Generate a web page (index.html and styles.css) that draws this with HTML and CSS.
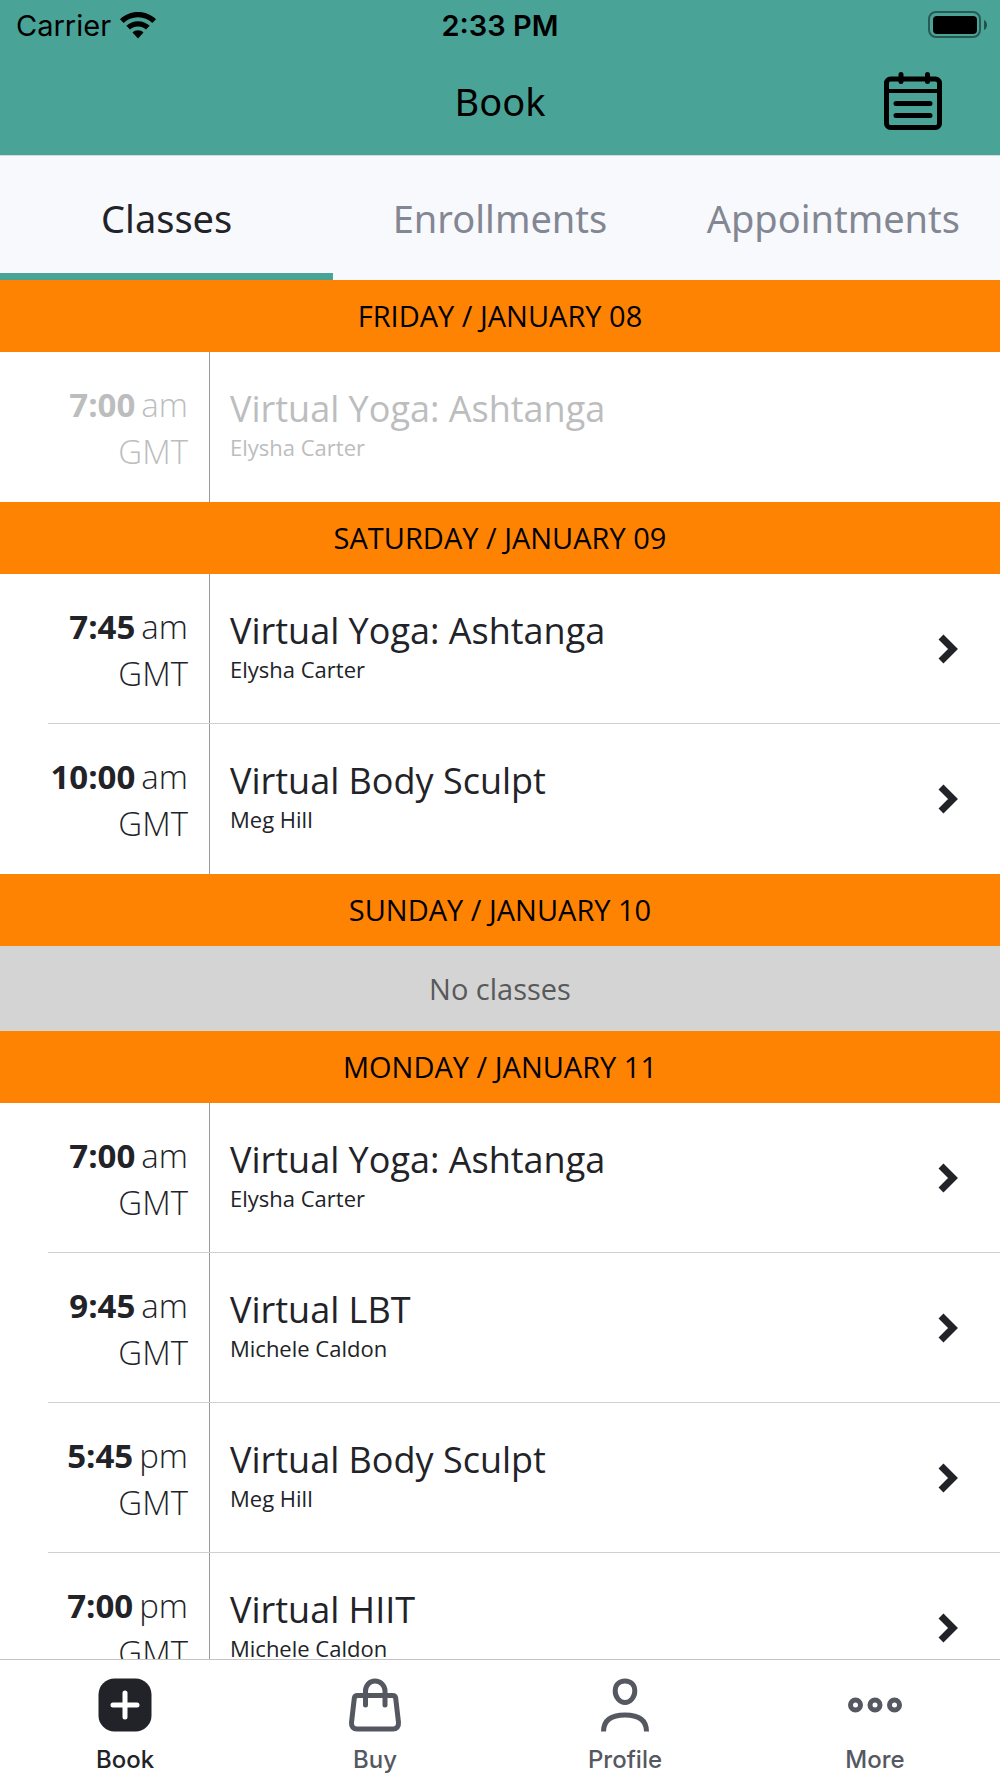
FILE: index.html
```html
<!DOCTYPE html>
<html lang="en">
<head>
    <meta charset="UTF-8">
    <meta name="viewport" content="width=device-width, initial-scale=1.0">
    <title>Book</title>
    <link rel="stylesheet" href="styles.css">
</head>
<body>
    <div class="wrapper">
        <!-- header -->
        <header class="header">
            <div class="status">
                <div class="carrier">
                    <span>Carrier</span>
                    <svg width="36" height="27" viewBox="0 0 36 27">
                        <path d="M18 0C11 0 4.700 2.700 0 7.200L3.700 11C7.400 7.400 12.400 5.300 18 5.300S28.600 7.400 32.300 11L36 7.200C31.300 2.700 25 0 18 0Z"/>
                        <path d="M18 9.200c-4.500 0-8.600 1.700-11.700 4.600L10 17.600c2.100-2 4.900-3.200 8-3.200s5.900 1.200 8 3.200l3.700-3.800C26.600 10.900 22.500 9.200 18 9.200Z"/>
                        <path d="M18 18.200c-2.100 0-4 .8-5.500 2.200L18 26.500l5.500-6.100c-1.500-1.400-3.400-2.200-5.500-2.200Z"/>
                    </svg>
                </div>
                <div class="clock">2:33 PM</div>
                <div class="battery">
                    <svg width="60" height="28" viewBox="0 0 60 28">
                        <rect x="1" y="1" width="51" height="25" rx="7" fill="none" stroke="#000" stroke-opacity=".45" stroke-width="2"/>
                        <rect x="5" y="5" width="44" height="18" rx="4"/>
                        <path d="M56 9c4 1.500 4 8.500 0 10Z" fill-opacity=".5"/>
                    </svg>
                </div>
            </div>
            <div class="title-bar">
                <h1>Book</h1>
                <button class="calendar" type="button" aria-label="Calendar">
                    <svg width="58" height="58" viewBox="0 0 58 58" fill="none" stroke="#000" stroke-linecap="round">
                        <rect x="2.500" y="7" width="53" height="48.500" rx="4" stroke-width="5"/>
                        <path d="M3 19h52" stroke-width="4"/>
                        <path d="M17 2.500v7M43.500 2.500v7M12 31.500h34M12 43.500h34" stroke-width="5"/>
                    </svg>
                </button>
            </div>
        </header>
        <!-- tabs -->
        <nav class="tabs">
            <a class="active" href="#classes">Classes</a>
            <a href="#enrollments">Enrollments</a>
            <a href="#appointments">Appointments</a>
        </nav>
        <!-- class list -->
        <main class="list" id="classes">
            <section>
                <h2>FRIDAY / JANUARY 08</h2>
                <ul>
                    <li class="past">
                        <div class="row">
                            <div class="time"><b>7:00</b><span>am</span><p>GMT</p></div>
                            <div class="info"><h3>Virtual Yoga: Ashtanga</h3><p>Elysha Carter</p></div>
                        </div>
                    </li>
                </ul>
            </section>
            <section>
                <h2>SATURDAY / JANUARY 09</h2>
                <ul>
                    <li>
                        <a class="row" href="#class">
                            <div class="time"><b>7:45</b><span>am</span><p>GMT</p></div>
                            <div class="info"><h3>Virtual Yoga: Ashtanga</h3><p>Elysha Carter</p></div>
                            <svg class="arrow" viewBox="0 0 20 32"><path d="M3 4l12 12L3 28"/></svg>
                        </a>
                    </li>
                    <li>
                        <a class="row" href="#class">
                            <div class="time"><b>10:00</b><span>am</span><p>GMT</p></div>
                            <div class="info"><h3>Virtual Body Sculpt</h3><p>Meg Hill</p></div>
                            <svg class="arrow" viewBox="0 0 20 32"><path d="M3 4l12 12L3 28"/></svg>
                        </a>
                    </li>
                </ul>
            </section>
            <section>
                <h2>SUNDAY / JANUARY 10</h2>
                <p class="empty">No classes</p>
            </section>
            <section>
                <h2>MONDAY / JANUARY 11</h2>
                <ul>
                    <li>
                        <a class="row" href="#class">
                            <div class="time"><b>7:00</b><span>am</span><p>GMT</p></div>
                            <div class="info"><h3>Virtual Yoga: Ashtanga</h3><p>Elysha Carter</p></div>
                            <svg class="arrow" viewBox="0 0 20 32"><path d="M3 4l12 12L3 28"/></svg>
                        </a>
                    </li>
                    <li>
                        <a class="row" href="#class">
                            <div class="time"><b>9:45</b><span>am</span><p>GMT</p></div>
                            <div class="info"><h3>Virtual LBT</h3><p>Michele Caldon</p></div>
                            <svg class="arrow" viewBox="0 0 20 32"><path d="M3 4l12 12L3 28"/></svg>
                        </a>
                    </li>
                    <li>
                        <a class="row" href="#class">
                            <div class="time"><b>5:45</b><span>pm</span><p>GMT</p></div>
                            <div class="info"><h3>Virtual Body Sculpt</h3><p>Meg Hill</p></div>
                            <svg class="arrow" viewBox="0 0 20 32"><path d="M3 4l12 12L3 28"/></svg>
                        </a>
                    </li>
                    <li>
                        <a class="row" href="#class">
                            <div class="time"><b>7:00</b><span>pm</span><p>GMT</p></div>
                            <div class="info"><h3>Virtual HIIT</h3><p>Michele Caldon</p></div>
                            <svg class="arrow" viewBox="0 0 20 32"><path d="M3 4l12 12L3 28"/></svg>
                        </a>
                    </li>
                </ul>
            </section>
        </main>
        <!-- bottom navigation -->
        <nav class="footer">
            <a class="active" href="#book">
                <svg viewBox="0 0 54 54">
                    <rect x="0.500" y="0.500" width="53" height="53" rx="16" fill="#222328"/>
                    <path d="M27 15v24M15 27h24" stroke="#fff" stroke-width="5" stroke-linecap="round"/>
                </svg>
                <span>Book</span>
            </a>
            <a href="#buy">
                <svg viewBox="0 0 54 54" fill="none" stroke="#555861" stroke-width="5" stroke-linecap="round" stroke-linejoin="round">
                    <path d="M9.500 17.500h35c2 0 3 1 3.200 2.700l2.800 24.300c.4 4-2 6.500-5.500 6.500H9c-3.500 0-5.900-2.500-5.500-6.500l2.800-24.300c.2-1.700 1.200-2.700 3.200-2.700Z"/>
                    <path d="M17.500 27V13c0-5.500 4-10 9.500-10s10 4.500 10 10v14"/>
                </svg>
                <span>Buy</span>
            </a>
            <a href="#profile">
                <svg viewBox="0 0 54 54" fill="none" stroke="#555861" stroke-width="5">
                    <path d="M27 3c6 0 9.800 4 9.800 10S32.500 24.500 27 24.500 17.200 19 17.200 13 21 3 27 3Z"/>
                    <path d="M5.500 53.500C5.500 42 13 37 27 37s21.500 5 21.500 16.500"/>
                </svg>
                <span>Profile</span>
            </a>
            <a href="#more">
                <svg viewBox="0 0 54 54" fill="none" stroke="#555861" stroke-width="5">
                    <circle cx="7.500" cy="27" r="5"/>
                    <circle cx="27" cy="27" r="5"/>
                    <circle cx="46.500" cy="27" r="5"/>
                </svg>
                <span>More</span>
            </a>
        </nav>
    </div>
</body>
</html>
```
FILE: styles.css
```css
*{
    padding: 0;
    margin: 0;
    list-style: none;
    box-sizing: border-box;
}
html, body{
    width: 100%;
    height: 100%;
}
body{
    font-family: "Open Sans", "Noto Sans", sans-serif;
    color: #222328;
    background: #fff;
}
a{
    color: inherit;
    text-decoration: none;
}
.wrapper{
    height: 100%;
    display: flex;
    flex-direction: column;
    overflow: hidden;
}

/* header */
.header{
    flex-shrink: 0;
    color: #000;
    background: #4aa397;
    border-bottom: 1px solid #d5dadd;
}
.status{
    display: grid;
    grid-template-columns: 1fr auto 1fr;
    align-items: center;
    height: 50px;
    padding: 0 12px;
    font-family: Inter, "Liberation Sans", sans-serif;
    font-size: 29px;
}
.carrier{
    display: flex;
    align-items: center;
    gap: 9px;
    padding-left: 4px;
}
.clock{
    font-weight: 600;
}
.battery{
    display: flex;
    justify-content: flex-end;
}
.title-bar{
    display: grid;
    grid-template-columns: 1fr auto 1fr;
    align-items: center;
    height: 105px;
    padding: 0 58px 3px;
}
.title-bar h1{
    grid-column: 2;
    font-family: "Noto Sans", "Open Sans", sans-serif;
    font-size: 38px;
    font-weight: 400;
    line-height: 52px;
}
.calendar{
    justify-self: end;
    border: 0;
    background: none;
}
.calendar svg{
    display: block;
}

/* tabs */
.tabs{
    flex-shrink: 0;
    display: grid;
    grid-template-columns: repeat(3, 1fr);
    height: 124px;
    background: #f8f9fc;
}
.tabs a{
    padding-top: 7px;
    border-bottom: 7px solid transparent;
    font-family: "Noto Sans", "Open Sans", sans-serif;
    font-size: 38px;
    line-height: 110px;
    text-align: center;
    color: #838793;
}
.tabs .active{
    color: #222328;
    border-color: #4aa397;
}

/* class list */
.list{
    flex: 1;
    min-height: 0;
    overflow-y: auto;
    scrollbar-width: none;
}
.list h2{
    font-size: 29px;
    font-weight: 400;
    line-height: 72px;
    text-align: center;
    color: #000;
    background: #ff8303;
}
.list li{
    height: 150px;
    padding-left: 48px;
}
.row{
    display: flex;
    height: 100%;
    padding-right: 42px;
    border-bottom: 1px solid #d0d0d0;
}
.list li:last-child .row{
    border-bottom: 0;
}
.time{
    width: 162px;
    padding: 29px 21px 0 0;
    border-right: 1px solid #999;
    font-size: 33px;
    font-weight: 300;
    line-height: 47px;
    text-align: right;
    white-space: nowrap;
}
.time b{
    font-weight: 700;
}
.time span{
    padding-left: 6px;
}
.info{
    flex: 1;
    padding: 33px 0 0 20px;
}
.info h3{
    font-size: 36px;
    font-weight: 400;
    line-height: 47px;
}
.info p{
    font-size: 22px;
    line-height: 30px;
}
.past b, .past span, .past p, .past h3{
    color: #bcbdbe;
}
.arrow{
    align-self: center;
    width: 20px;
    height: 32px;
    fill: none;
    stroke: #222328;
    stroke-width: 7;
}
.empty{
    font-size: 29px;
    line-height: 85px;
    text-align: center;
    color: #58595b;
    background: #d4d4d4;
}

/* bottom navigation */
.footer{
    flex-shrink: 0;
    display: grid;
    grid-template-columns: repeat(4, 1fr);
    height: 119px;
    border-top: 1px solid #c4c4c4;
    background: #fff;
    font-family: Inter, "Liberation Sans", sans-serif;
    font-size: 24px;
    font-weight: 500;
    color: #555861;
}
.footer a{
    display: flex;
    flex-direction: column;
    align-items: center;
    padding-top: 18px;
}
.footer svg{
    width: 54px;
    height: 54px;
}
.footer span{
    padding-top: 14px;
    line-height: 28px;
}
.footer .active{
    color: #222328;
}
```
